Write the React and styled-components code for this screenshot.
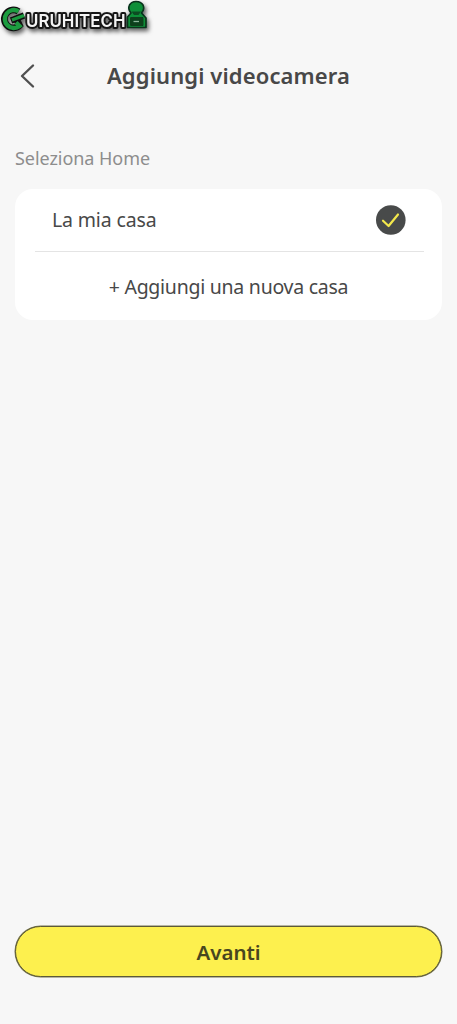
import React from "react";
import styled, { createGlobalStyle } from "styled-components";

const GlobalStyle = createGlobalStyle`
  * { box-sizing: border-box; }
  body { margin: 0; background: #f7f7f7; }
`;

const Screen = styled.div`
  position: relative;
  display: flex;
  flex-direction: column;
  width: 100%;
  height: 1024px;
  padding: 48px 15px 47px;
  background: #f7f7f7;
  color: #484848;
  font-family: "Noto Sans", sans-serif;
`;

const Watermark = styled.svg`
  position: absolute;
  top: 0;
  left: 0;
`;

const Header = styled.header`
  display: grid;
  grid-template-columns: 28px 1fr 28px;
  align-items: center;
  height: 56px;
`;

const BackButton = styled.button`
  display: flex;
  padding: 0 0 0 4px;
  border: 0;
  background: none;
  color: #505050;
`;

const Title = styled.h1`
  margin: 0;
  padding-bottom: 2px;
  text-align: center;
  white-space: nowrap;
  font-size: 22px;
  line-height: 28px;
  font-weight: 600;
  letter-spacing: 0.12px;
`;

const SectionLabel = styled.h2`
  margin: 42px 0 19px;
  color: #8d8d8d;
  font-size: 18px;
  line-height: 24px;
  font-weight: 400;
  letter-spacing: -0.05px;
`;

const Card = styled.section`
  padding: 0 18px 0 20px;
  border-radius: 18px;
  background: #fff;
`;

const HomeRow = styled.div`
  display: flex;
  align-items: center;
  justify-content: space-between;
  height: 63px;
  padding: 0 18px 0 17px;
  border-bottom: 1px solid #e4e4e4;
  font-size: 19.5px;
  letter-spacing: -0.15px;
`;

const HomeName = styled.span`
  padding-bottom: 1px;
`;

const AddRow = styled.button`
  display: block;
  width: 100%;
  height: 68px;
  padding: 0 2px 0 0;
  border: 0;
  background: none;
  color: inherit;
  font: inherit;
  font-size: 19.5px;
  letter-spacing: -0.26px;
  white-space: nowrap;
`;

const NextButton = styled.button`
  height: 51px;
  margin-top: auto;
  padding: 0;
  border: 1px solid #5c5a38;
  border-radius: 26px;
  background: #fdf04e;
  box-shadow: 0 0 0 0.5px #77754f;
  color: #48461f;
  font: inherit;
  font-size: 20.5px;
  font-weight: 600;
`;

function Logo() {
  return (
    <Watermark width="160" height="42" viewBox="0 0 160 42" aria-label="GuruHiTech">
      <defs>
        <filter id="shade" x="-10%" y="-20%" width="125%" height="160%">
          <feDropShadow dx="2" dy="3" stdDeviation="2" floodColor="#000" floodOpacity="0.6" />
        </filter>
      </defs>
      <g filter="url(#shade)">
        <g fill="none">
          <path d="M18.500 11.500A9 9 0 1 0 19.500 25.500L17 20" stroke="#111" strokeWidth="6.800" />
          <path d="M11 20.500L24 15.500" stroke="#111" strokeWidth="6.400" />
          <path d="M18.500 11.300A9 9 0 1 0 19.500 26L16 22.500" stroke="#1d9c40" strokeWidth="4.400" />
          <path d="M12 20L24 15.500" stroke="#1d9c40" strokeWidth="3.400" />
        </g>
        <text
          x="26" y="26.500" textLength="99.500" lengthAdjust="spacingAndGlyphs"
          fontFamily="Inter, sans-serif" fontSize="17.600" fontWeight="600"
          fill="#f4f4f4" stroke="#151515" strokeWidth="4" strokeLinejoin="round" paintOrder="stroke"
        >URUHITECH</text>
        <path d="M131 13Q127.500 9 129.500 5Q131.500 1.500 136 1.500Q141 1.500 143 5Q145 9 141.500 13L146 18V27.500H127.500V17Z" fill="#0d8f38" stroke="#07311a" strokeWidth="1.600" strokeLinejoin="round" />
        <path d="M131.500 11.500H141L138.500 15H134Z" fill="#074c22" />
        <rect x="130" y="17" width="13.500" height="9" rx="1" fill="#07401f" />
        <path d="M133.500 21.500H139" stroke="#8fb79b" strokeWidth="1.300" />
      </g>
    </Watermark>
  );
}

export default function App() {
  return (
    <>
      <GlobalStyle />
      <Screen>
        <Logo />
        <Header>
          <BackButton aria-label="Indietro">
            <svg width="18" height="26" viewBox="0 0 18 26" fill="none" stroke="currentColor" strokeWidth="2.4" strokeLinecap="round" strokeLinejoin="round">
              <path d="M14 2.500L3 13L14 23.500" />
            </svg>
          </BackButton>
          <Title>Aggiungi videocamera</Title>
        </Header>
        <SectionLabel>Seleziona Home</SectionLabel>
        <Card>
          <HomeRow>
            <HomeName>La mia casa</HomeName>
            <svg width="30" height="30" viewBox="0 0 30 30" fill="none">
              <circle cx="14.800" cy="15" r="14.800" fill="#484a4a" />
              <path d="M7 15.700L12.600 21L22 9.500" stroke="#f3e84c" strokeWidth="2.200" strokeLinecap="round" strokeLinejoin="round" />
            </svg>
          </HomeRow>
          <AddRow>+ Aggiungi una nuova casa</AddRow>
        </Card>
        <NextButton>Avanti</NextButton>
      </Screen>
    </>
  );
}
